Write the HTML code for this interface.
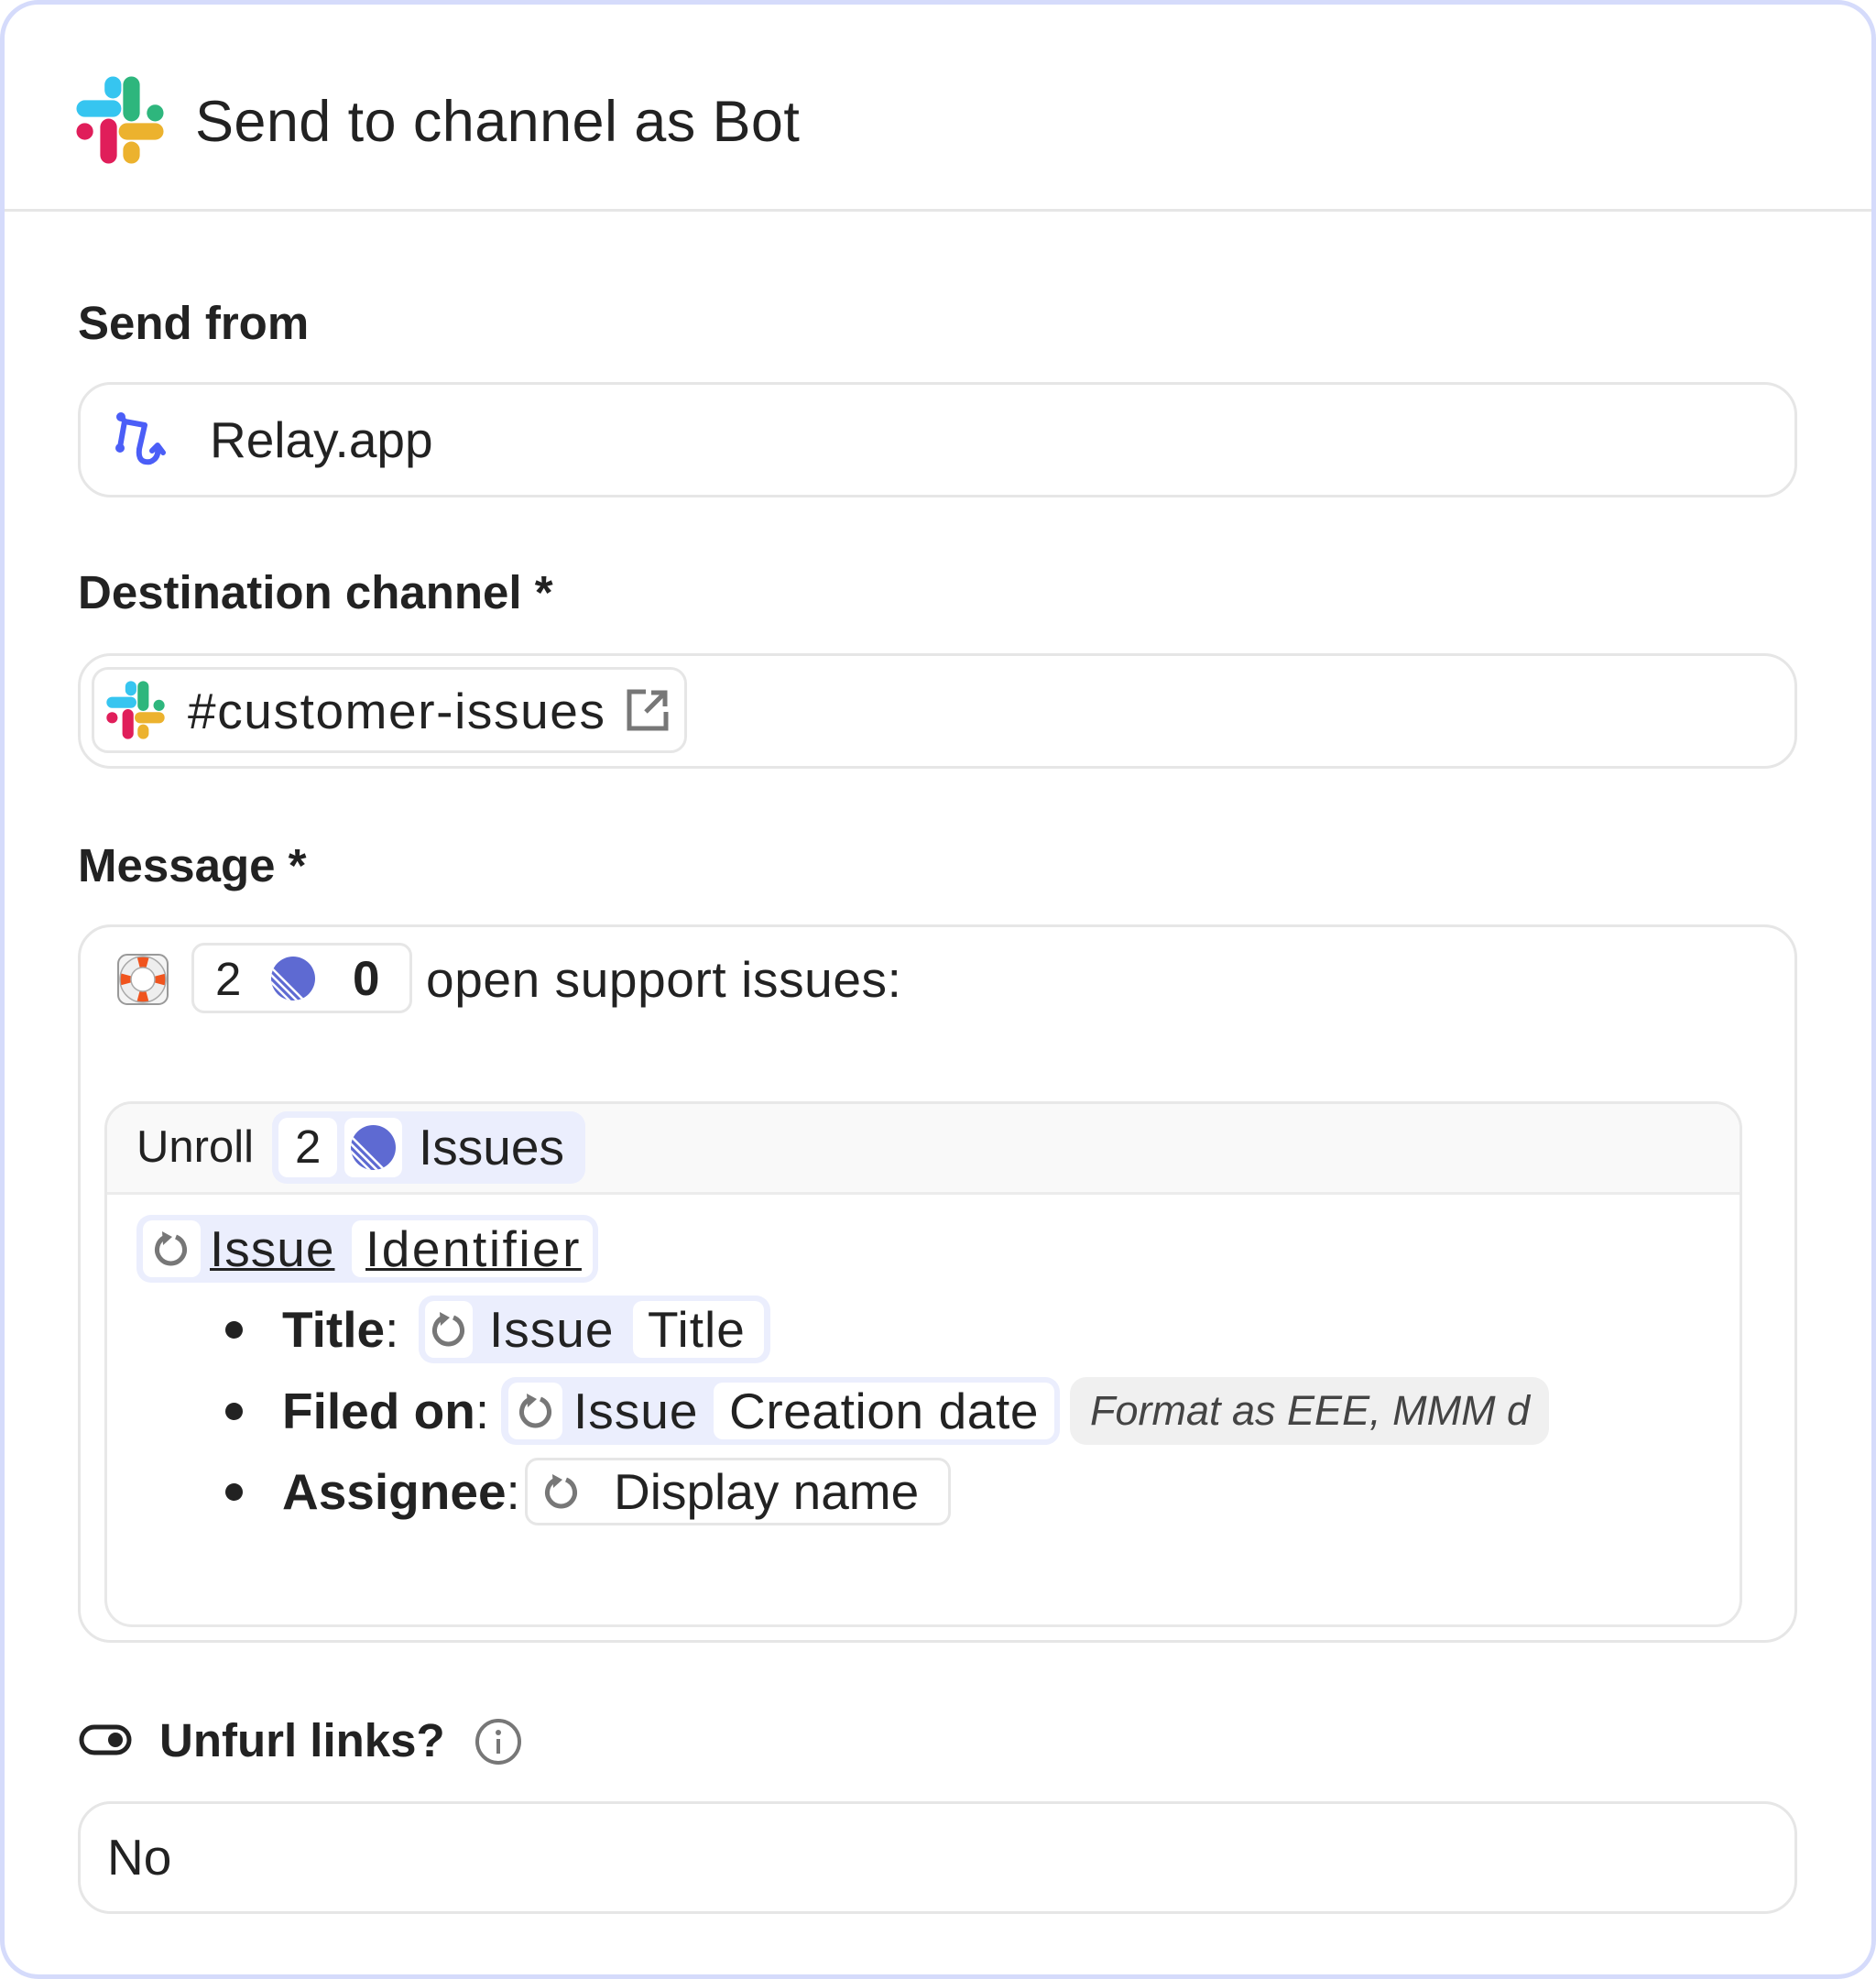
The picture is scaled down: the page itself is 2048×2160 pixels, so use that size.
<!DOCTYPE html>
<html><head><meta charset="utf-8"><style>
*{box-sizing:border-box;margin:0;padding:0}
body{width:2048px;height:2160px;background:#fff;font-family:"Liberation Sans",Arial,sans-serif;color:#222;overflow:hidden;position:relative}
.a{position:absolute}
.t{position:absolute;line-height:80px;height:80px;white-space:nowrap}
.lbl{font-size:51px;font-weight:bold;color:#222}
.val{font-size:55px;color:#222}
.box{position:absolute;border:3px solid #e6e6e6;border-radius:36px;background:#fff}
.wb{position:absolute;background:#fff;border-radius:10px}
.blue{position:absolute;background:#ebeefd;border-radius:16px}
</style></head><body>
<div class="a" style="left:0;top:0;width:2048px;height:2160px;border:5px solid #d5dbfb;border-radius:42px"></div>
<div class="a" style="left:5px;top:228px;width:2038px;height:3px;background:#e6e6e6"></div>

<svg class="a" style="left:83px;top:83px" width="96" height="96" viewBox="0 0 100 100">
<g stroke-linecap="round" stroke-width="19" fill="none">
<line x1="42" y1="10" x2="42" y2="16" stroke="#36c5f0"/><line x1="10" y1="37" x2="42" y2="37" stroke="#36c5f0"/>
<line x1="63" y1="10" x2="63" y2="42" stroke="#2eb67d"/><line x1="90" y1="42" x2="90" y2="42" stroke="#2eb67d"/>
<line x1="10" y1="63" x2="10" y2="63" stroke="#e01e5a"/><line x1="37" y1="58" x2="37" y2="90" stroke="#e01e5a"/>
<line x1="58" y1="63" x2="90" y2="63" stroke="#ecb22e"/><line x1="63" y1="84" x2="63" y2="90" stroke="#ecb22e"/>
</g></svg>
<div class="t" style="left:213px;top:93px;font-size:63px;color:#222;letter-spacing:0.4px">Send to channel as Bot</div>

<div class="t lbl" style="left:85px;top:313px">Send from</div>
<div class="box" style="left:85px;top:417px;width:1877px;height:126px"></div>
<svg class="a" style="left:122px;top:448px" width="66" height="66" viewBox="0 0 66 66">
<g fill="none" stroke="#4b5ef7" stroke-width="6" stroke-linecap="round" stroke-linejoin="round">
<path d="M10 6 L14 12 L9 40"/><path d="M14 12 L36 16 L30 42 Q28 58 42 56 Q52 52 50 40"/><path d="M44 44 L50 38 L56 46"/>
</g><circle cx="10" cy="7" r="5" fill="#4b5ef7"/><circle cx="9" cy="41" r="5" fill="#4b5ef7"/></svg>
<div class="t val" style="left:229px;top:440px">Relay.app</div>

<div class="t lbl" style="left:85px;top:607px">Destination channel *</div>
<div class="box" style="left:85px;top:713px;width:1877px;height:126px"></div>
<div class="a" style="left:100px;top:728px;width:650px;height:94px;border:3px solid #e6e6e6;border-radius:18px"></div>
<svg class="a" style="left:116px;top:743px" width="64" height="64" viewBox="0 0 100 100">
<g stroke-linecap="round" stroke-width="19" fill="none">
<line x1="42" y1="10" x2="42" y2="16" stroke="#36c5f0"/><line x1="10" y1="37" x2="42" y2="37" stroke="#36c5f0"/>
<line x1="63" y1="10" x2="63" y2="42" stroke="#2eb67d"/><line x1="90" y1="42" x2="90" y2="42" stroke="#2eb67d"/>
<line x1="10" y1="63" x2="10" y2="63" stroke="#e01e5a"/><line x1="37" y1="58" x2="37" y2="90" stroke="#e01e5a"/>
<line x1="58" y1="63" x2="90" y2="63" stroke="#ecb22e"/><line x1="63" y1="84" x2="63" y2="90" stroke="#ecb22e"/>
</g></svg>
<div class="t val" style="left:205px;top:736px;letter-spacing:1.6px">#customer-issues</div>
<svg class="a" style="left:683px;top:751px" width="48" height="48" viewBox="0 0 48 48">
<g fill="none" stroke="#777" stroke-width="5"><path d="M22 4 H4 V44 H44 V26"/><path d="M22 26 L42 6"/><path d="M28 5 H43 V20"/></g></svg>

<div class="t lbl" style="left:85px;top:905px">Message *</div>
<div class="box" style="left:85px;top:1009px;width:1877px;height:784px"></div>
<svg class="a" style="left:127px;top:1040px" width="58" height="58" viewBox="0 0 58 58">
<rect x="2" y="2" width="54" height="54" rx="10" fill="#f4f4f4" stroke="#999" stroke-width="2"/>
<circle cx="29" cy="29" r="19" fill="none" stroke="#eee" stroke-width="12"/>
<circle cx="29" cy="29" r="19" fill="none" stroke="#f0541e" stroke-width="12" stroke-dasharray="10 19.85" stroke-dashoffset="5"/>
<circle cx="29" cy="29" r="25" fill="none" stroke="#aaa" stroke-width="1.5"/>
<circle cx="29" cy="29" r="13" fill="#fff" stroke="#aaa" stroke-width="1.5"/></svg>
<div class="a" style="left:209px;top:1029px;width:241px;height:77px;border:3px solid #e6e6e6;border-radius:14px"></div>
<div class="t val" style="left:235px;top:1029px;font-size:51px">2</div>
<svg class="a" style="left:295px;top:1043px" width="50" height="50" viewBox="0 0 50 50"><defs><clipPath id="c1"><circle cx="25" cy="25" r="24"/></clipPath></defs>
<circle cx="25" cy="25" r="24" fill="#5e6ad2"/><g clip-path="url(#c1)" stroke="#fff" stroke-width="2.5"><line x1="0" y1="12" x2="38" y2="50"/><line x1="0" y1="20" x2="30" y2="50"/><line x1="0" y1="28" x2="22" y2="50"/><line x1="0" y1="36" x2="14" y2="50"/></g></svg>
<div class="t val" style="left:385px;top:1029px;font-weight:bold;font-size:53px">0</div>
<div class="t val" style="left:465px;top:1029px;letter-spacing:0.6px">open support issues:</div>

<div class="a" style="left:114px;top:1202px;width:1788px;height:574px;border:3px solid #e8e8e8;border-radius:30px;overflow:hidden">
<div style="height:99px;background:#f9f9f9;border-bottom:3px solid #ececec"></div></div>
<div class="t" style="left:149px;top:1212px;font-size:49px">Unroll</div>
<div class="blue" style="left:297px;top:1213px;width:342px;height:79px"></div>
<div class="wb" style="left:304px;top:1220px;width:64px;height:65px"></div>
<div class="t val" style="left:322px;top:1212px;font-size:51px">2</div>
<div class="wb" style="left:376px;top:1220px;width:63px;height:65px"></div>
<svg class="a" style="left:382px;top:1227px" width="51" height="51" viewBox="0 0 50 50"><defs><clipPath id="c2"><circle cx="25" cy="25" r="24"/></clipPath></defs>
<circle cx="25" cy="25" r="24" fill="#5e6ad2"/><g clip-path="url(#c2)" stroke="#fff" stroke-width="2.5"><line x1="0" y1="12" x2="38" y2="50"/><line x1="0" y1="20" x2="30" y2="50"/><line x1="0" y1="28" x2="22" y2="50"/><line x1="0" y1="36" x2="14" y2="50"/></g></svg>
<div class="t val" style="left:457px;top:1212px">Issues</div>

<div class="blue" style="left:149px;top:1326px;width:504px;height:74px"></div>
<div class="wb" style="left:156px;top:1332px;width:63px;height:62px"></div>
<svg class="a" style="left:166px;top:1341px" width="42" height="44" viewBox="0 0 42 44"><path d="M15 9 A15 15 0 1 0 26 9" fill="none" stroke="#777" stroke-width="5"/><path d="M11 3 L22 9 L12 18 Z" fill="#777"/></svg>
<div class="t val" style="left:229px;top:1323px;text-decoration:underline;text-decoration-thickness:3px;letter-spacing:1px">Issue</div>
<div class="wb" style="left:384px;top:1332px;width:263px;height:62px"></div>
<div class="t val" style="left:399px;top:1323px;text-decoration:underline;text-decoration-thickness:3px;letter-spacing:2.5px">Identifier</div>

<div class="a" style="left:246px;top:1442px;width:19px;height:19px;border-radius:50%;background:#222"></div>
<div class="a" style="left:246px;top:1531px;width:19px;height:19px;border-radius:50%;background:#222"></div>
<div class="a" style="left:246px;top:1619px;width:19px;height:19px;border-radius:50%;background:#222"></div>

<div class="t val" style="left:308px;top:1411px"><b>Title</b>:</div>
<div class="blue" style="left:457px;top:1414px;width:384px;height:74px"></div>
<div class="wb" style="left:464px;top:1420px;width:52px;height:62px"></div>
<svg class="a" style="left:469px;top:1429px" width="42" height="44" viewBox="0 0 42 44"><path d="M15 9 A15 15 0 1 0 26 9" fill="none" stroke="#777" stroke-width="5"/><path d="M11 3 L22 9 L12 18 Z" fill="#777"/></svg>
<div class="t val" style="left:534px;top:1411px;letter-spacing:1px">Issue</div>
<div class="wb" style="left:691px;top:1420px;width:143px;height:62px"></div>
<div class="t val" style="left:707px;top:1411px;letter-spacing:1px">Title</div>

<div class="t val" style="left:308px;top:1500px"><b>Filed on</b>:</div>
<div class="blue" style="left:547px;top:1503px;width:610px;height:74px"></div>
<div class="wb" style="left:555px;top:1509px;width:59px;height:62px"></div>
<svg class="a" style="left:564px;top:1518px" width="42" height="44" viewBox="0 0 42 44"><path d="M15 9 A15 15 0 1 0 26 9" fill="none" stroke="#777" stroke-width="5"/><path d="M11 3 L22 9 L12 18 Z" fill="#777"/></svg>
<div class="t val" style="left:626px;top:1500px;letter-spacing:1px">Issue</div>
<div class="wb" style="left:779px;top:1509px;width:372px;height:62px"></div>
<div class="t val" style="left:796px;top:1500px;letter-spacing:0.6px">Creation date</div>
<div class="a" style="left:1168px;top:1503px;width:523px;height:74px;background:#f0f0f0;border-radius:18px"></div>
<div class="t" style="left:1190px;top:1500px;font-size:45px;font-style:italic;color:#444">Format as EEE, MMM d</div>

<div class="t val" style="left:308px;top:1588px"><b>Assignee</b>:</div>
<div class="a" style="left:573px;top:1591px;width:465px;height:74px;border:3px solid #e6e6e6;border-radius:14px"></div>
<svg class="a" style="left:592px;top:1606px" width="42" height="44" viewBox="0 0 42 44"><path d="M15 9 A15 15 0 1 0 26 9" fill="none" stroke="#777" stroke-width="5"/><path d="M11 3 L22 9 L12 18 Z" fill="#777"/></svg>
<div class="t val" style="left:670px;top:1588px">Display name</div>

<svg class="a" style="left:86px;top:1882px" width="60" height="36" viewBox="0 0 60 36"><rect x="3" y="3" width="52" height="28" rx="14" fill="none" stroke="#222" stroke-width="5"/><circle cx="40" cy="17" r="8" fill="#222"/></svg>
<div class="t lbl" style="left:174px;top:1860px">Unfurl links?</div>
<svg class="a" style="left:517px;top:1874px" width="54" height="54" viewBox="0 0 54 54"><circle cx="27" cy="27" r="23" fill="none" stroke="#777" stroke-width="4"/><rect x="25" y="24" width="4" height="16" fill="#777"/><circle cx="27" cy="17" r="3" fill="#777"/></svg>
<div class="box" style="left:85px;top:1966px;width:1877px;height:123px"></div>
<div class="t val" style="left:117px;top:1987px">No</div>
</body></html>
